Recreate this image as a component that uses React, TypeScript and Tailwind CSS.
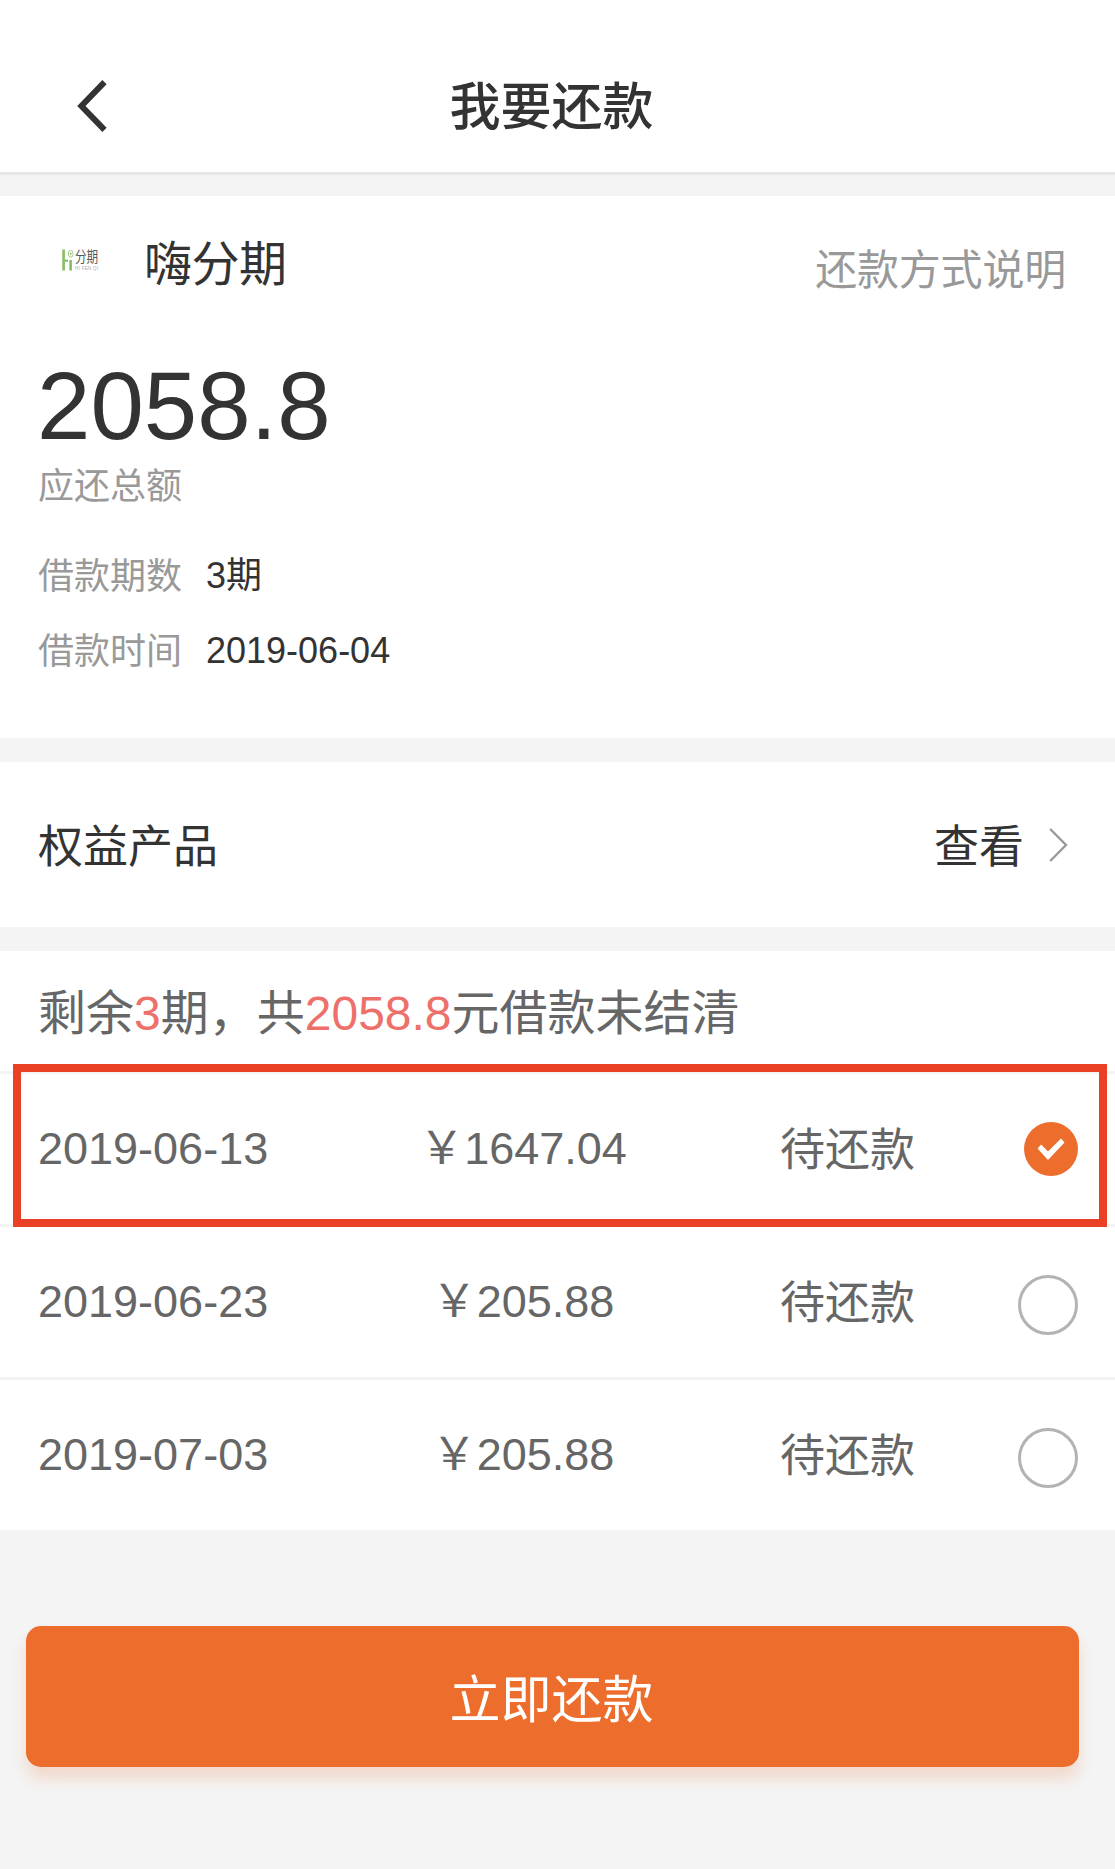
import React from "react";

type Installment = { date: string; amount: string; checked: boolean };

const installments: Installment[] = [
  { date: "2019-06-13", amount: "1647.04", checked: true },
  { date: "2019-06-23", amount: "205.88", checked: false },
  { date: "2019-07-03", amount: "205.88", checked: false },
];

function BackIcon() {
  return (
    <svg className="h-[52px] w-[32px]" viewBox="0 0 32 52" fill="none" stroke="#333" strokeWidth="6">
      <path d="M28.5 2.2 L5.4 26 L28.5 49.8" />
    </svg>
  );
}

function BrandLogo() {
  return (
    <div className="flex h-[22px] w-[37px] items-start">
      <svg className="h-[22px] w-[13px] shrink-0" viewBox="0 0 13 22" fill="none">
        <path d="M1.6 0.5 V21.5" stroke="#86bd62" strokeWidth="2.6" />
        <path d="M3 11.7 H6" stroke="#86bd62" strokeWidth="2.2" />
        <path d="M8.6 11 V21.5" stroke="#86bd62" strokeWidth="2.6" />
        <rect x="6.5" y="1.5" width="4.4" height="6.6" rx="2.2" stroke="#a4cf88" strokeWidth="1" />
        <path d="M8.7 3.4 V6.2 M7.6 4.8 H9.8" stroke="#86bd62" strokeWidth="0.8" />
      </svg>
      <div className="flex flex-col">
        <span className="h-[16px] w-[24px] origin-left scale-x-[0.8] whitespace-nowrap text-[14.5px] leading-[17px] text-[#555]">
          分期
        </span>
        <span className="h-[6px] whitespace-nowrap text-[4.5px] leading-[7px] tracking-[0.3px] text-[#aaa]">
          HI FEN QI
        </span>
      </div>
    </div>
  );
}

function Radio({ checked }: { checked: boolean }) {
  if (!checked) {
    return <span className="mt-[5px] size-[60px] rounded-full border-[3px] border-[#b3b3b3]" />;
  }
  return (
    <svg className="size-[54px]" viewBox="0 0 54 54">
      <circle cx="27" cy="27" r="27" fill="#ed6d2d" />
      <path d="M13.6 26.4 L17.2 22.6 L24 29.6 L37 16.6 L40.5 20.4 L24 38 Z" fill="#fff" />
    </svg>
  );
}

export default function App() {
  return (
    <div className="min-h-[1869px] w-[1115px] bg-[#f4f4f4] font-['Liberation_Sans','Noto_Sans_CJK_SC',sans-serif] text-[#333]">
      <header className="grid h-[175px] grid-cols-[1fr_auto_1fr] items-center border-b-[3px] border-[#e6e6e6] bg-white pt-[39px] pr-[12px]">
        <button className="ml-[76px] w-fit" aria-label="返回">
          <BackIcon />
        </button>
        <h1 className="mt-[5px] text-[51px] leading-[60px] font-medium">我要还款</h1>
      </header>

      <section className="mt-[21px] h-[542px] bg-white px-[38px] pt-[44px]">
        <div className="flex h-[50px] items-start justify-between pr-[11px]">
          <div className="flex">
            <div className="mt-[9px] ml-[24px] w-[82px]">
              <BrandLogo />
            </div>
            <span className="mt-px text-[48px] leading-[48px] tracking-[-0.5px]">嗨分期</span>
          </div>
          <a className="mt-[10px] text-[42px] leading-[42px] tracking-[-0.2px] text-[#999]">还款方式说明</a>
        </div>
        <div className="mt-[68px] -ml-px text-[96px] leading-[96px]">2058.8</div>
        <div className="mt-[15px] text-[36px] leading-[36px] text-[#999]">应还总额</div>
        <dl className="mt-[33px] text-[36px] leading-[75px]">
          <div className="flex gap-[24px]">
            <dt className="pt-px text-[#999]">借款期数</dt>
            <dd className="h-[75px]">3期</dd>
          </div>
          <div className="-mt-px flex gap-[24px]">
            <dt className="pt-px text-[#999]">借款时间</dt>
            <dd>2019-06-04</dd>
          </div>
        </dl>
      </section>

      <section className="mt-6 flex h-[165px] items-center justify-between bg-white pr-[47px] pl-[38px] text-[45px] leading-[60px]">
        <span className="mt-[6px]">权益产品</span>
        <div className="flex items-center">
          <span className="mt-[6px]">查看</span>
          <svg className="ml-[25px] h-[36px] w-[19px]" viewBox="0 0 19 36" fill="none" stroke="#999" strokeWidth="2.4">
            <path d="M1.2 2 L17 18 L1.2 34" />
          </svg>
        </div>
      </section>

      <section className="relative mt-6 bg-white">
        <p className="h-[120px] pl-[38px] text-[48px] leading-[125px] text-[#666]">
          剩余<span className="text-[#ee706a]">3</span>期，共<span className="text-[#ee706a]">2058.8</span>
          元借款未结清
        </p>
        <ul className="text-[45px] leading-[60px] text-[#666]">
          {installments.map((item) => (
            <li
              key={item.date}
              className="grid h-[153px] grid-cols-[329px_312px_1fr_auto] items-center border-t-[3px] border-[#f4f4f4] pr-[37px] pl-[38px]"
            >
              <span>{item.date}</span>
              <span className="text-center">￥{item.amount}</span>
              <span className="mt-[3px] pl-[101px]">待还款</span>
              <Radio checked={item.checked} />
            </li>
          ))}
        </ul>
        <div className="pointer-events-none absolute top-[113px] left-[13px] h-[163px] w-[1094px] border-8 border-[#ea4025]" />
      </section>

      <button className="mt-[96px] ml-[26px] h-[141px] w-[1053px] rounded-[15px] bg-[#ed6d2d] pt-[8px] pr-[2px] text-[51px] leading-[60px] text-white shadow-[0_12px_15px_rgba(237,109,45,0.2)]">
        立即还款
      </button>
    </div>
  );
}
